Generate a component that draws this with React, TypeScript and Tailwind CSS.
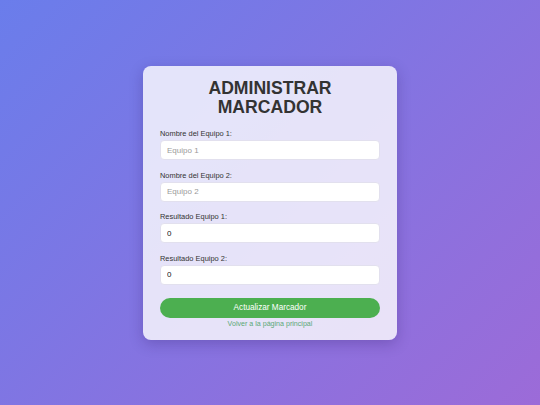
import { useState } from "react";

export default function App() {
  const [team1, setTeam1] = useState("");
  const [team2, setTeam2] = useState("");
  const [score1, setScore1] = useState("0");
  const [score2, setScore2] = useState("0");

  return (
    <div
      className="min-h-screen w-full flex items-center justify-center bg-[linear-gradient(135deg,#6a7deb_0%,#9c6bd8_100%)]"
      style={{ fontFamily: '"Liberation Sans", Arial, sans-serif' }}
    >
      <div className="w-[254px] bg-white/80 rounded-[8px] shadow-[0_4px_14px_rgba(40,20,90,0.25)] px-[17px] pt-[13px] pb-[11px]">
        {/* Title */}
        <h1 className="text-center font-bold text-[17.6px] leading-[19px] text-[#333] mb-[12.5px]">
          ADMINISTRAR
          <br />
          MARCADOR
        </h1>

        <Field label="Nombre del Equipo 1:" placeholder="Equipo 1" value={team1} onChange={setTeam1} />
        <Field label="Nombre del Equipo 2:" placeholder="Equipo 2" value={team2} onChange={setTeam2} />
        <Field label="Resultado Equipo 1:" value={score1} onChange={setScore1} />
        <Field label="Resultado Equipo 2:" value={score2} onChange={setScore2} />

        {/* margin collapses with the last field's mb */}
        <button
          type="button"
          className="block mt-[13.5px] w-full h-[20px] rounded-full bg-[#4caf50] text-white text-[8.2px] leading-[20px]"
        >
          Actualizar Marcador
        </button>
        <a href="#" className="block mt-[0.5px] text-center text-[#5aa877] text-[7.1px] leading-[10px]">
          Volver a la página principal
        </a>
      </div>
    </div>
  );
}

// ── Field ────────────────────────────────────────────────────────────────

function Field({
  label,
  placeholder,
  value,
  onChange,
}: {
  label: string;
  placeholder?: string;
  value: string;
  onChange: (v: string) => void;
}) {
  return (
    <div className="mb-[10.5px]">
      <label className="block text-[7.45px] leading-[10px] text-[#333] mb-[1px]">{label}</label>
      <input
        type="text"
        value={value}
        placeholder={placeholder}
        onChange={(e) => onChange(e.target.value)}
        className="block w-full h-[20px] bg-white border border-[#e2e0ee] rounded-[4px] px-[6px] text-[8px] text-[#111] placeholder:text-[#9a9a9a] outline-none"
      />
    </div>
  );
}
